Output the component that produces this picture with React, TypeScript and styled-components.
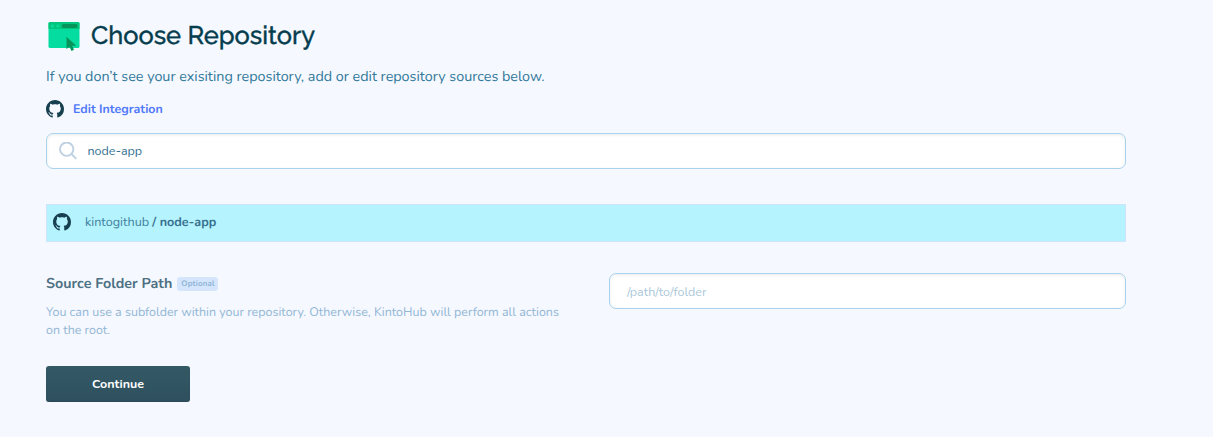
import React from "react";
import styled, { createGlobalStyle } from "styled-components";

const GlobalStyle = createGlobalStyle`
  *, *::before, *::after { box-sizing: border-box; }
  body {
    margin: 0;
    background: #f5f8ff;
    font-family: Nunito, Lato, "Open Sans", sans-serif;
    -webkit-font-smoothing: antialiased;
    text-rendering: geometricPrecision;
  }
`;

const Page = styled.main`
  width: 1213px;
  height: 437px;
  padding: 18px 87px 0 46px;
  background: #f5f8ff;
  overflow: hidden;
`;

const Header = styled.header`
  display: flex;
  align-items: center;
  height: 36px;
  gap: 9px;
`;

const Title = styled.h1`
  margin: 0;
  padding-bottom: 2px;
  font-family: Raleway, Lato, sans-serif;
  font-size: 25.4px;
  line-height: 34px;
  font-weight: 500;
  color: #053d4e;
  white-space: nowrap;
  -webkit-text-stroke: 0.35px #053d4e;
`;

const Intro = styled.p`
  margin: 14px 0 0;
  font-size: 14.33px;
  line-height: 20px;
  color: #31789a;
`;

const Integration = styled.div`
  display: flex;
  align-items: center;
  gap: 9px;
  height: 18px;
  margin-top: 12px;
`;

const EditLink = styled.a`
  padding-top: 2px;
  font-size: 12.4px;
  line-height: 18px;
  font-weight: 700;
  color: #5078fa;
`;

const Field = styled.label`
  display: flex;
  align-items: center;
  width: 100%;
  height: 36px;
  border: 1px solid #a9d3ec;
  border-radius: 7px;
  background: #fff;
  box-shadow: inset 0 1px 3px rgba(20, 60, 80, 0.1);
`;

const SearchField = styled(Field)`
  margin-top: 15px;
  padding: 0 12px;
  gap: 10.5px;
`;

const PathField = styled(Field)`
  width: 517px;
  padding: 2px 17px 0;
`;

const Input = styled.input`
  flex: 1;
  min-width: 0;
  height: 20px;
  padding: 0 0 2px;
  border: 0;
  outline: 0;
  background: transparent;
  font-family: inherit;
  font-size: 12.5px;
  color: #31718f;
  &::placeholder { color: #abc8d9; opacity: 1; }
`;

const RepositoryRow = styled.div`
  display: flex;
  align-items: center;
  height: 38px;
  margin-top: 35px;
  padding: 0 6px 2px;
  border: 1px solid #cfe3fb;
  background: #b5f3fe;
`;

const RepositoryName = styled.span`
  margin-left: 14px;
  padding-top: 2px;
  font-size: 12.6px;
  line-height: 18px;
  color: #3f7f9c;
  white-space: pre;
`;

const Strong = styled.strong`
  font-weight: 700;
  color: #37718f;
`;

const FolderSection = styled.section`
  display: flex;
  justify-content: space-between;
  margin-top: 31px;
`;

const FolderText = styled.div`
  width: 530px;
`;

const FolderHeading = styled.div`
  display: flex;
  align-items: center;
  gap: 5px;
  height: 21px;
`;

const Label = styled.h2`
  margin: 0;
  padding-top: 2px;
  font-size: 14.3px;
  line-height: 21px;
  font-weight: 700;
  color: #4d7083;
`;

const Badge = styled.span`
  display: flex;
  align-items: center;
  justify-content: center;
  width: 41px;
  height: 14px;
  margin-top: 1px;
  padding-bottom: 1px;
  border-radius: 3px;
  background: #d5e6fc;
  font-size: 8px;
  font-weight: 700;
  letter-spacing: 0.1px;
  color: #8fb4d8;
`;

const Description = styled.p`
  margin: 10px 0 0;
  font-size: 12.48px;
  line-height: 18px;
  color: #93b7d5;
  white-space: nowrap;
`;

const ContinueButton = styled.button`
  display: block;
  width: 144px;
  height: 36px;
  margin-top: 26px;
  padding: 0 0 2px;
  border: 0;
  border-radius: 3px;
  background: linear-gradient(#335965, #2f505e);
  box-shadow: inset 0 -1px 1px rgba(25, 55, 68, 0.3);
  font-family: inherit;
  font-size: 12.5px;
  font-weight: 700;
  color: #fff;
`;

const WindowIcon = () => (
  <svg width="36" height="36" viewBox="0 0 36 36" fill="none">
    <rect x="2.5" y="4" width="31" height="26" rx="1.6" fill="#05dca0" />
    <path d="M2.5 11V5.6Q2.5 4 4.1 4h27.8q1.6 0 1.6 1.6V11Z" fill="#03c67d" />
    <circle cx="6.5" cy="8" r="1.6" fill="#05dca0" />
    <circle cx="12" cy="8" r="1.6" fill="#05dca0" />
    <rect x="15.7" y="6" width="16" height="4" rx="2" fill="#07945a" />
    <path d="M20.5 18.7V31l3-2.3 2 4.2 2.5-1.1-1.9-4h4.1Z" fill="#07945a" />
  </svg>
);

const GithubIcon = () => (
  <svg width="18" height="18" viewBox="0 0 16 16" fill="#17404f">
    <path d="M8 0C3.58 0 0 3.58 0 8c0 3.54 2.29 6.53 5.47 7.59.4.07.55-.17.55-.38 0-.19-.01-.82-.01-1.49-2.01.37-2.53-.49-2.69-.94-.09-.23-.48-.94-.82-1.13-.28-.15-.68-.52-.01-.53.63-.01 1.08.58 1.23.82.72 1.21 1.87.87 2.33.66.07-.52.28-.87.51-1.07-1.78-.2-3.64-.89-3.64-3.95 0-.87.31-1.59.82-2.15-.08-.2-.36-1.02.08-2.12 0 0 .67-.21 2.2.82.64-.18 1.32-.27 2-.27s1.36.09 2 .27c1.53-1.04 2.2-.82 2.2-.82.44 1.1.16 1.92.08 2.12.51.56.82 1.27.82 2.15 0 3.07-1.87 3.75-3.65 3.95.29.25.54.73.54 1.48 0 1.07-.01 1.93-.01 2.2 0 .21.15.46.55.38A8.01 8.01 0 0 0 16 8c0-4.42-3.58-8-8-8Z" />
  </svg>
);

const SearchIcon = () => (
  <svg width="18" height="18" viewBox="0 0 18 18" fill="none" stroke="#bed0e1" strokeWidth="1.9">
    <circle cx="7.7" cy="7.2" r="6.7" />
    <path d="m12.5 12 4.8 4.8" />
  </svg>
);

export default function App() {
  return (
    <>
      <GlobalStyle />
      <Page>
        <Header>
          <WindowIcon />
          <Title>Choose Repository</Title>
        </Header>
        <Intro>If you don’t see your exisiting repository, add or edit repository sources below.</Intro>
        <Integration>
          <GithubIcon />
          <EditLink>Edit Integration</EditLink>
        </Integration>
        <SearchField>
          <SearchIcon />
          <Input defaultValue="node-app" aria-label="Search repositories" />
        </SearchField>
        <RepositoryRow>
          <GithubIcon />
          <RepositoryName>kintogithub <Strong>/ node-app</Strong></RepositoryName>
        </RepositoryRow>
        <FolderSection>
          <FolderText>
            <FolderHeading>
              <Label>Source Folder Path</Label>
              <Badge>Optional</Badge>
            </FolderHeading>
            <Description>
              You can use a subfolder within your repository. Otherwise, KintoHub will perform all actions
              <br />
              on the root.
            </Description>
          </FolderText>
          <PathField>
            <Input placeholder="/path/to/folder" aria-label="Source folder path" />
          </PathField>
        </FolderSection>
        <ContinueButton>Continue</ContinueButton>
      </Page>
    </>
  );
}
